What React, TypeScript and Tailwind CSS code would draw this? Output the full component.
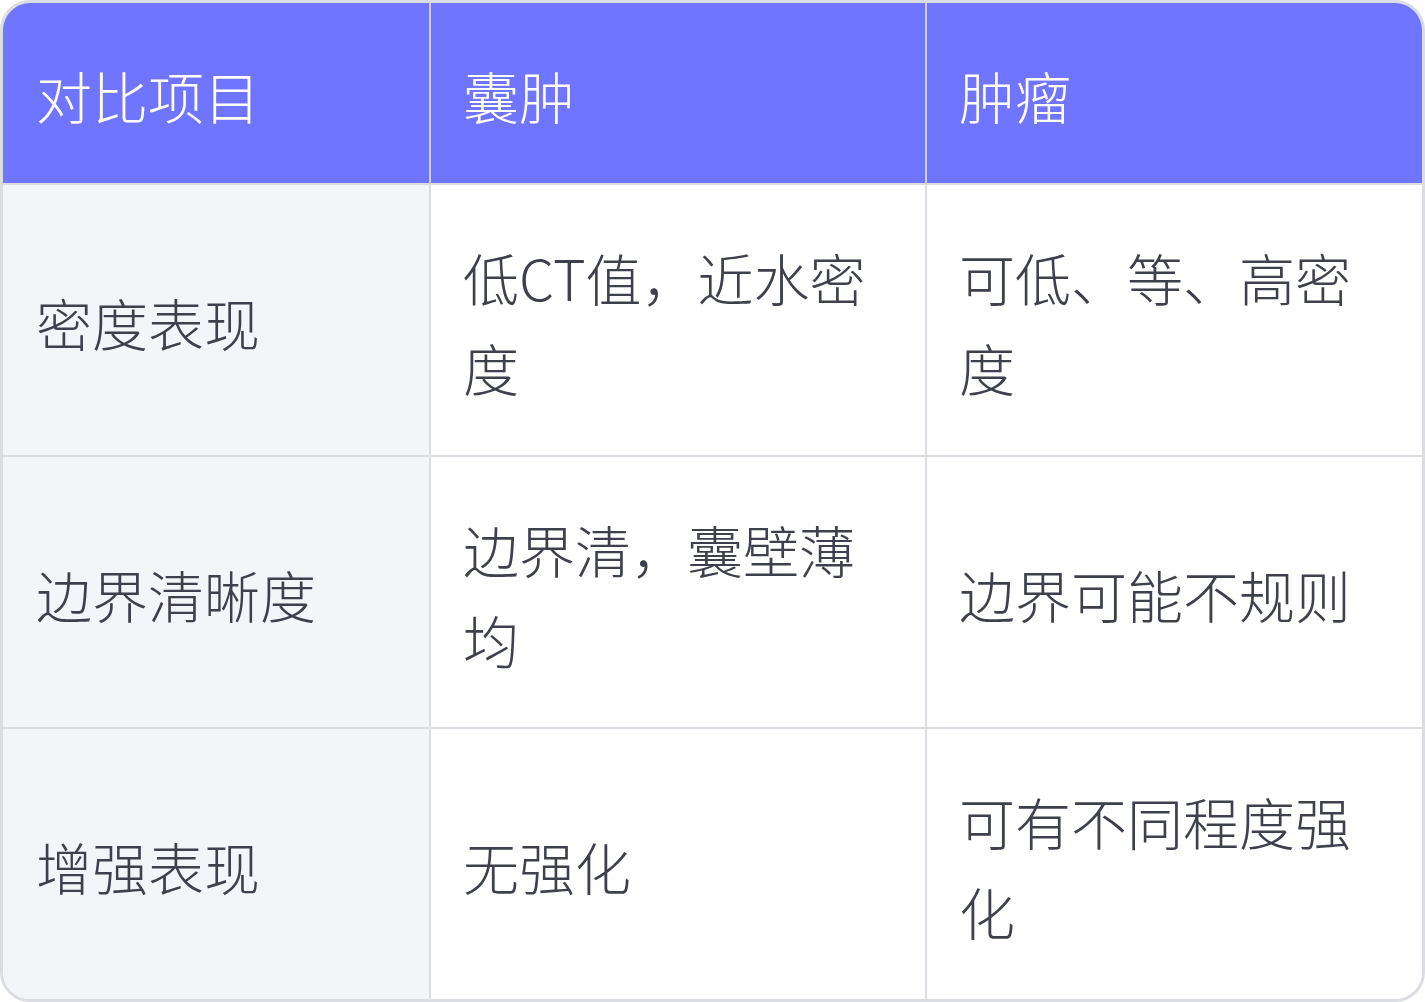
import React from 'react';

const rows = [
  { item: '密度表现', cyst: '低CT值，近水密度', tumor: '可低、等、高密度' },
  { item: '边界清晰度', cyst: '边界清，囊壁薄均', tumor: '边界可能不规则' },
  { item: '增强表现', cyst: '无强化', tumor: '可有不同程度强化' },
];

const font = { fontFamily: '"Noto Sans CJK SC", "Noto Sans", sans-serif' };

const App: React.FC = () => {
  return (
    <div className="w-[1425px] h-[1002px] bg-white" style={font}>
      <div className="h-full border-[3px] border-[#dcdde2] rounded-[30px] overflow-hidden grid grid-cols-[426px_496px_1fr] grid-rows-[182px_272px_272px_270px] text-[56px] leading-[90px] font-light">
        {/* header */}
        <div className="bg-[#7075ff] text-white flex items-center pl-[33px] pt-1 border-b-2 border-[#dcdde2]">对比项目</div>
        <div className="bg-[#7075ff] text-white flex items-center pl-[32px] pt-1 border-l-2 border-l-[#cfd1f4] border-b-2 border-b-[#dcdde2]">囊肿</div>
        <div className="bg-[#7075ff] text-white flex items-center pl-[32px] pt-1 border-l-2 border-l-[#cfd1f4] border-b-2 border-b-[#dcdde2]">肿瘤</div>

        {rows.map((r, i) => {
          const last = i === rows.length - 1;
          const bottom = last ? '' : 'border-b-2';
          return (
            <React.Fragment key={r.item}>
              <div className={`bg-[#f4f5f9] text-[#3e414c] flex items-center pl-[33px] pr-[20px] pt-1 border-[#dcdde2] ${bottom}`}>{r.item}</div>
              <div className={`bg-white text-[#3e414c] flex items-center pl-[32px] pr-[34px] pt-1 border-l-2 border-[#dcdde2] ${bottom}`}>
                <span>{r.cyst}</span>
              </div>
              <div className={`bg-white text-[#3e414c] flex items-center pl-[32px] pr-[34px] pt-1 border-l-2 border-[#dcdde2] ${bottom}`}>
                <span>{r.tumor}</span>
              </div>
            </React.Fragment>
          );
        })}
      </div>
    </div>
  );
};

export default App;
